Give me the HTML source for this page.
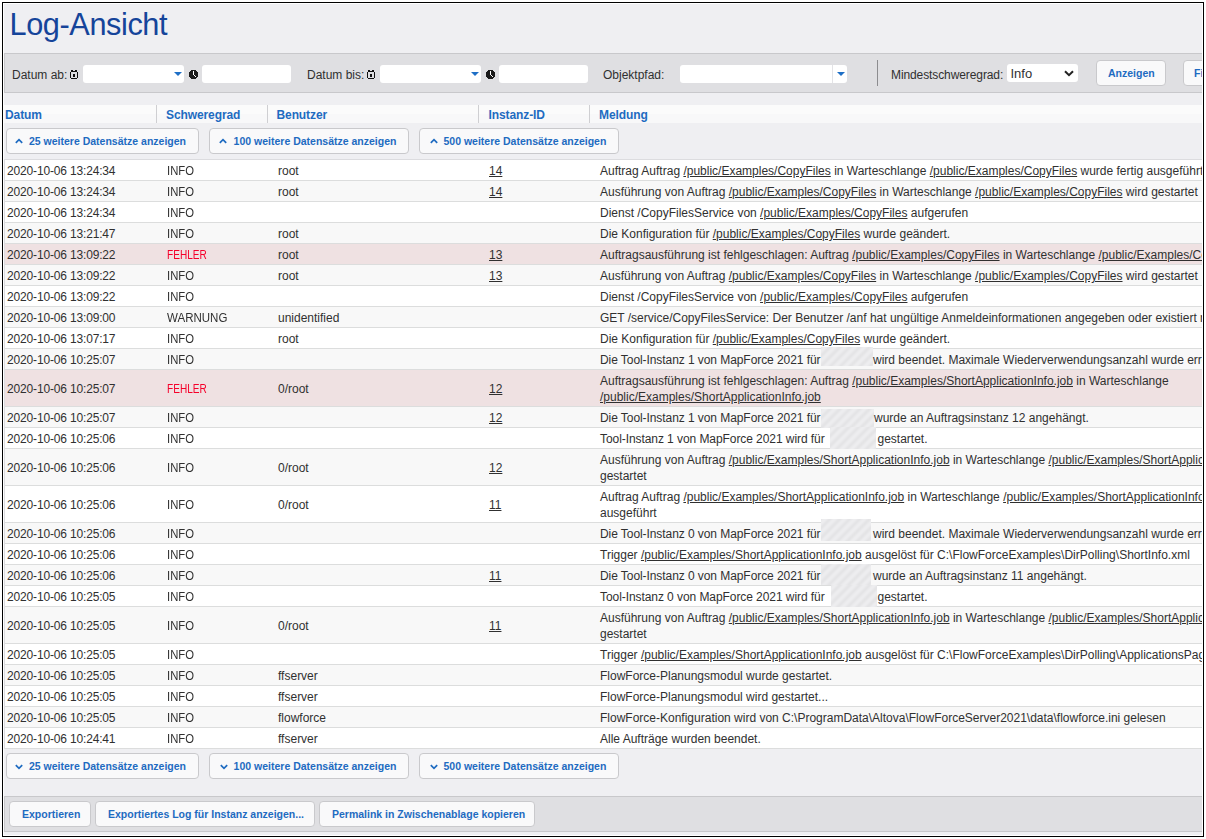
<!DOCTYPE html>
<html><head><meta charset="utf-8"><style>
*{box-sizing:border-box;margin:0;padding:0}
html,body{width:1206px;height:839px;overflow:hidden;background:#fff}
body{position:relative;font-family:"Liberation Sans",sans-serif;color:#303030;font-size:12px}
#frame{position:absolute;left:2px;top:2px;width:1202px;height:835px;border:1px solid #000;background:#fff}
#inner{position:absolute;left:4px;top:4px;width:1198px;height:831px;background:#efeff2;overflow:hidden}
#pg{position:absolute;left:-4px;top:-4px;width:1400px;height:900px}
.a{position:absolute;white-space:nowrap}
.t{line-height:16px;font-size:12px}
.title{font-size:30.7px;letter-spacing:-0.4px;color:#15449a;line-height:36px}
.bar{position:absolute;left:4px;width:1300px;background:#dfdfe2;border:1px solid #c8c8cb}
.inp{position:absolute;background:#fff;border-radius:3px}
.tri{position:absolute;width:0;height:0;border-left:4px solid transparent;border-right:4px solid transparent;border-top:4.5px solid #1e6fc6}
.btn{position:absolute;background:#f9f9fa;border:1px solid #c9c9cc;border-radius:4px}
.bt{position:absolute;font-weight:bold;font-size:10.5px;color:#1e6bc1;line-height:14px;white-space:nowrap}
.hd{position:absolute;font-weight:bold;font-size:12px;letter-spacing:-0.1px;color:#1e6bc1;line-height:16px;white-space:nowrap}
.sep{position:absolute;width:1px;background:#cfcfd2}
.row{position:absolute;left:4px;width:1300px;border-bottom:1px solid #dcdddd}
.c{position:absolute;white-space:nowrap;line-height:16px}
.u{text-decoration:underline}
.err{color:#f5002a}
.blur{position:absolute;overflow:hidden}
.bi{position:absolute;left:-4px;top:-4px;right:-4px;bottom:-4px;background-image:repeating-linear-gradient(135deg,rgba(0,0,0,0) 0px,rgba(0,0,0,0) 3px,rgba(0,0,0,0.075) 5px,rgba(0,0,0,0) 7px) !important;filter:blur(1px)}
</style></head>
<body><div id="frame"></div><div id="inner"><div id="pg">
<div class="a title" style="left:9.5px;top:7px">Log-Ansicht</div>
<div class="bar" style="top:53px;height:40px"></div>
<div class="a t" style="left:12px;top:67px;">Datum ab:</div>
<svg class="a" style="left:70px;top:70px" width="8" height="9" viewBox="0 0 8 9" shape-rendering="crispEdges"><path d="M1 0h2v1h-2z M5 0h2v1h-2z M1 1h6v1h-6z M0 2h1v6h-1z M7 2h1v6h-1z M1 8h6v1h-6z M3 4h2v3h-2z" fill="#111"/></svg>
<div class="inp" style="left:83px;top:65px;width:101px;height:18px"></div>
<div class="tri" style="left:174px;top:72px"></div>
<svg class="a" style="left:189px;top:70px" width="9" height="9" viewBox="0 0 9 9" shape-rendering="crispEdges"><path d="M2 0h5v1h-5z M1 1h7v1h-7z M0 2h9v5h-9z M1 7h7v1h-7z M2 8h5v1h-5z" fill="#1a1a1a"/><path d="M4 1h1v4h-1z M5 5h1v1h-1z M6 6h1v1h-1z" fill="#fff"/></svg>
<div class="inp" style="left:202px;top:65px;width:89px;height:18px"></div>
<div class="a t" style="left:307px;top:67px;">Datum bis:</div>
<svg class="a" style="left:367px;top:70px" width="8" height="9" viewBox="0 0 8 9" shape-rendering="crispEdges"><path d="M1 0h2v1h-2z M5 0h2v1h-2z M1 1h6v1h-6z M0 2h1v6h-1z M7 2h1v6h-1z M1 8h6v1h-6z M3 4h2v3h-2z" fill="#111"/></svg>
<div class="inp" style="left:380px;top:65px;width:101px;height:18px"></div>
<div class="tri" style="left:471px;top:72px"></div>
<svg class="a" style="left:486px;top:70px" width="9" height="9" viewBox="0 0 9 9" shape-rendering="crispEdges"><path d="M2 0h5v1h-5z M1 1h7v1h-7z M0 2h9v5h-9z M1 7h7v1h-7z M2 8h5v1h-5z" fill="#1a1a1a"/><path d="M4 1h1v4h-1z M5 5h1v1h-1z M6 6h1v1h-1z" fill="#fff"/></svg>
<div class="inp" style="left:499px;top:65px;width:89px;height:18px"></div>
<div class="a t" style="left:603px;top:67px;">Objektpfad:</div>
<div class="inp" style="left:680px;top:65px;width:167px;height:18px"></div>
<div class="a" style="left:832px;top:65px;width:1px;height:18px;background:#e3e3e6"></div>
<div class="tri" style="left:837px;top:72px"></div>
<div class="a" style="left:877px;top:60px;width:1px;height:26px;background:#8c8c8f"></div>
<div class="a t" style="left:891px;top:67px;letter-spacing:-0.1px">Mindestschweregrad:</div>
<div class="inp" style="left:1007px;top:64px;width:71px;height:18px"></div>
<div class="a" style="left:1010.5px;top:66px;font-size:13px;line-height:16px">Info</div>
<svg class="a" style="left:1064px;top:70px" width="10" height="7" viewBox="0 0 10 7"><path d="M1 1.2 L5 5.2 L9 1.2" stroke="#222" stroke-width="2" fill="none"/></svg>
<div class="btn" style="left:1096px;top:60px;width:70px;height:26px"></div>
<div class="bt" style="left:1108px;top:66px">Anzeigen</div>
<div class="btn" style="left:1183px;top:60px;width:80px;height:26px"></div>
<div class="bt" style="left:1194px;top:66px">Filter</div>
<div class="a" style="left:4px;top:105px;width:1300px;height:18px;background:linear-gradient(#fbfbfb 0,#fbfbfb 9px,#f8f8f9 9px,#f8f8f9 18px)"></div>
<div class="sep" style="left:156px;top:105px;height:18px"></div>
<div class="sep" style="left:267px;top:105px;height:18px"></div>
<div class="sep" style="left:478px;top:105px;height:18px"></div>
<div class="sep" style="left:589px;top:105px;height:18px"></div>
<div class="hd" style="left:5px;top:107px">Datum</div>
<div class="hd" style="left:166px;top:107px">Schweregrad</div>
<div class="hd" style="left:276.5px;top:107px">Benutzer</div>
<div class="hd" style="left:488.5px;top:107px">Instanz-ID</div>
<div class="hd" style="left:599px;top:107px">Meldung</div>
<div class="btn" style="left:6px;top:128px;width:193px;height:26px"></div>
<svg class="a" style="left:14.6px;top:138px" width="8" height="6" viewBox="0 0 8 6"><path d="M0.8 4.8 L4 1.6 L7.2 4.8" stroke="#1e6bc1" stroke-width="1.7" fill="none"/></svg>
<div class="bt" style="left:29px;top:134px">25 weitere Datensätze anzeigen</div>
<div class="btn" style="left:209px;top:128px;width:200px;height:26px"></div>
<svg class="a" style="left:218.8px;top:138px" width="8" height="6" viewBox="0 0 8 6"><path d="M0.8 4.8 L4 1.6 L7.2 4.8" stroke="#1e6bc1" stroke-width="1.7" fill="none"/></svg>
<div class="bt" style="left:233.6px;top:134px">100 weitere Datensätze anzeigen</div>
<div class="btn" style="left:419px;top:128px;width:200px;height:26px"></div>
<svg class="a" style="left:429.6px;top:138px" width="8" height="6" viewBox="0 0 8 6"><path d="M0.8 4.8 L4 1.6 L7.2 4.8" stroke="#1e6bc1" stroke-width="1.7" fill="none"/></svg>
<div class="bt" style="left:443.5px;top:134px">500 weitere Datensätze anzeigen</div>
<div class="a" style="left:4px;top:159px;width:1300px;height:1px;background:#dcdcdf"></div>
<div class="row" style="top:160px;height:21px;background:#ffffff"></div>
<div class="c" style="left:7px;top:163px;letter-spacing:-0.16px">2020-10-06 13:24:34</div>
<div class="c" style="left:167px;top:163px;transform:scaleX(0.94);transform-origin:0 0">INFO</div>
<div class="c" style="left:278px;top:163px">root</div>
<div class="c u" style="left:489px;top:163px">14</div>
<div class="c" style="left:600px;top:163px">Auftrag Auftrag <span class="u">/public/Examples/CopyFiles</span> in Warteschlange <span class="u">/public/Examples/CopyFiles</span> wurde fertig ausgeführt</div>
<div class="row" style="top:181px;height:21px;background:#f8f8f8"></div>
<div class="c" style="left:7px;top:184px;letter-spacing:-0.16px">2020-10-06 13:24:34</div>
<div class="c" style="left:167px;top:184px;transform:scaleX(0.94);transform-origin:0 0">INFO</div>
<div class="c" style="left:278px;top:184px">root</div>
<div class="c u" style="left:489px;top:184px">14</div>
<div class="c" style="left:600px;top:184px">Ausführung von Auftrag <span class="u">/public/Examples/CopyFiles</span> in Warteschlange <span class="u">/public/Examples/CopyFiles</span> wird gestartet</div>
<div class="row" style="top:202px;height:21px;background:#ffffff"></div>
<div class="c" style="left:7px;top:205px;letter-spacing:-0.16px">2020-10-06 13:24:34</div>
<div class="c" style="left:167px;top:205px;transform:scaleX(0.94);transform-origin:0 0">INFO</div>
<div class="c" style="left:600px;top:205px">Dienst /CopyFilesService von <span class="u">/public/Examples/CopyFiles</span> aufgerufen</div>
<div class="row" style="top:223px;height:21px;background:#f8f8f8"></div>
<div class="c" style="left:7px;top:226px;letter-spacing:-0.16px">2020-10-06 13:21:47</div>
<div class="c" style="left:167px;top:226px;transform:scaleX(0.94);transform-origin:0 0">INFO</div>
<div class="c" style="left:278px;top:226px">root</div>
<div class="c" style="left:600px;top:226px">Die Konfiguration für <span class="u">/public/Examples/CopyFiles</span> wurde geändert.</div>
<div class="row" style="top:244px;height:21px;background:#efe1e2"></div>
<div class="c" style="left:7px;top:247px;letter-spacing:-0.16px">2020-10-06 13:09:22</div>
<div class="c err" style="left:167px;top:247px;transform:scaleX(0.84);transform-origin:0 0">FEHLER</div>
<div class="c" style="left:278px;top:247px">root</div>
<div class="c u" style="left:489px;top:247px">13</div>
<div class="c" style="left:600px;top:247px">Auftragsausführung ist fehlgeschlagen: Auftrag <span class="u">/public/Examples/CopyFiles</span> in Warteschlange <span class="u">/public/Examples/CopyFiles</span></div>
<div class="row" style="top:265px;height:21px;background:#f8f8f8"></div>
<div class="c" style="left:7px;top:268px;letter-spacing:-0.16px">2020-10-06 13:09:22</div>
<div class="c" style="left:167px;top:268px;transform:scaleX(0.94);transform-origin:0 0">INFO</div>
<div class="c" style="left:278px;top:268px">root</div>
<div class="c u" style="left:489px;top:268px">13</div>
<div class="c" style="left:600px;top:268px">Ausführung von Auftrag <span class="u">/public/Examples/CopyFiles</span> in Warteschlange <span class="u">/public/Examples/CopyFiles</span> wird gestartet</div>
<div class="row" style="top:286px;height:21px;background:#ffffff"></div>
<div class="c" style="left:7px;top:289px;letter-spacing:-0.16px">2020-10-06 13:09:22</div>
<div class="c" style="left:167px;top:289px;transform:scaleX(0.94);transform-origin:0 0">INFO</div>
<div class="c" style="left:600px;top:289px">Dienst /CopyFilesService von <span class="u">/public/Examples/CopyFiles</span> aufgerufen</div>
<div class="row" style="top:307px;height:21px;background:#f8f8f8"></div>
<div class="c" style="left:7px;top:310px;letter-spacing:-0.16px">2020-10-06 13:09:00</div>
<div class="c" style="left:167px;top:310px;transform:scaleX(0.96);transform-origin:0 0">WARNUNG</div>
<div class="c" style="left:278px;top:310px">unidentified</div>
<div class="c" style="left:600px;top:310px">GET /service/CopyFilesService: Der Benutzer /anf hat ungültige Anmeldeinformationen angegeben oder existiert nicht</div>
<div class="row" style="top:328px;height:21px;background:#ffffff"></div>
<div class="c" style="left:7px;top:331px;letter-spacing:-0.16px">2020-10-06 13:07:17</div>
<div class="c" style="left:167px;top:331px;transform:scaleX(0.94);transform-origin:0 0">INFO</div>
<div class="c" style="left:278px;top:331px">root</div>
<div class="c" style="left:600px;top:331px">Die Konfiguration für <span class="u">/public/Examples/CopyFiles</span> wurde geändert.</div>
<div class="row" style="top:349px;height:21px;background:#f8f8f8"></div>
<div class="c" style="left:7px;top:352px;letter-spacing:-0.16px">2020-10-06 10:25:07</div>
<div class="c" style="left:167px;top:352px;transform:scaleX(0.94);transform-origin:0 0">INFO</div>
<div class="c" style="left:600px;top:352px;letter-spacing:-0.07px">Die Tool-Instanz 1 von MapForce 2021 für </div>
<div class="blur" style="left:821px;top:347px;width:52px;height:19px"><div class="bi" style="background:#eeeef0"></div></div>
<div class="c" style="left:873px;top:352px">wird beendet. Maximale Wiederverwendungsanzahl wurde erreicht</div>
<div class="row" style="top:370px;height:37px;background:#efe1e2"></div>
<div class="c" style="left:7px;top:381px;letter-spacing:-0.16px">2020-10-06 10:25:07</div>
<div class="c err" style="left:167px;top:381px;transform:scaleX(0.84);transform-origin:0 0">FEHLER</div>
<div class="c" style="left:278px;top:381px">0/root</div>
<div class="c u" style="left:489px;top:381px">12</div>
<div class="c" style="left:600px;top:373px">Auftragsausführung ist fehlgeschlagen: Auftrag <span class="u">/public/Examples/ShortApplicationInfo.job</span> in Warteschlange<br><span class="u">/public/Examples/ShortApplicationInfo.job</span></div>
<div class="row" style="top:407px;height:21px;background:#f8f8f8"></div>
<div class="c" style="left:7px;top:410px;letter-spacing:-0.16px">2020-10-06 10:25:07</div>
<div class="c" style="left:167px;top:410px;transform:scaleX(0.94);transform-origin:0 0">INFO</div>
<div class="c u" style="left:489px;top:410px">12</div>
<div class="c" style="left:600px;top:410px;letter-spacing:-0.07px">Die Tool-Instanz 1 von MapForce 2021 für </div>
<div class="blur" style="left:821px;top:409px;width:53px;height:19px"><div class="bi" style="background:#eeeef0"></div></div>
<div class="c" style="left:874px;top:410px">wurde an Auftragsinstanz 12 angehängt.</div>
<div class="row" style="top:428px;height:21px;background:#ffffff"></div>
<div class="c" style="left:7px;top:431px;letter-spacing:-0.16px">2020-10-06 10:25:06</div>
<div class="c" style="left:167px;top:431px;transform:scaleX(0.94);transform-origin:0 0">INFO</div>
<div class="c" style="left:600px;top:431px;letter-spacing:-0.07px">Tool-Instanz 1 von MapForce 2021 wird für </div>
<div class="blur" style="left:830px;top:427px;width:46px;height:22px"><div class="bi" style="background:#eeeef0"></div></div>
<div class="c" style="left:877.5px;top:431px">gestartet.</div>
<div class="row" style="top:449px;height:37px;background:#f8f8f8"></div>
<div class="c" style="left:7px;top:460px;letter-spacing:-0.16px">2020-10-06 10:25:06</div>
<div class="c" style="left:167px;top:460px;transform:scaleX(0.94);transform-origin:0 0">INFO</div>
<div class="c" style="left:278px;top:460px">0/root</div>
<div class="c u" style="left:489px;top:460px">12</div>
<div class="c" style="left:600px;top:452px">Ausführung von Auftrag <span class="u">/public/Examples/ShortApplicationInfo.job</span> in Warteschlange <span class="u">/public/Examples/ShortApplicationInfo.job</span> wird<br>gestartet</div>
<div class="row" style="top:486px;height:37px;background:#ffffff"></div>
<div class="c" style="left:7px;top:497px;letter-spacing:-0.16px">2020-10-06 10:25:06</div>
<div class="c" style="left:167px;top:497px;transform:scaleX(0.94);transform-origin:0 0">INFO</div>
<div class="c" style="left:278px;top:497px">0/root</div>
<div class="c u" style="left:489px;top:497px">11</div>
<div class="c" style="left:600px;top:489px">Auftrag Auftrag <span class="u">/public/Examples/ShortApplicationInfo.job</span> in Warteschlange <span class="u">/public/Examples/ShortApplicationInfo.job</span> wurde fertig<br>ausgeführt</div>
<div class="row" style="top:523px;height:21px;background:#f8f8f8"></div>
<div class="c" style="left:7px;top:526px;letter-spacing:-0.16px">2020-10-06 10:25:06</div>
<div class="c" style="left:167px;top:526px;transform:scaleX(0.94);transform-origin:0 0">INFO</div>
<div class="c" style="left:600px;top:526px;letter-spacing:-0.07px">Die Tool-Instanz 0 von MapForce 2021 für </div>
<div class="blur" style="left:821px;top:519px;width:50px;height:22px"><div class="bi" style="background:#eeeef0"></div></div>
<div class="c" style="left:873px;top:526px">wird beendet. Maximale Wiederverwendungsanzahl wurde erreicht</div>
<div class="row" style="top:544px;height:21px;background:#ffffff"></div>
<div class="c" style="left:7px;top:547px;letter-spacing:-0.16px">2020-10-06 10:25:06</div>
<div class="c" style="left:167px;top:547px;transform:scaleX(0.94);transform-origin:0 0">INFO</div>
<div class="c" style="left:600px;top:547px">Trigger <span class="u">/public/Examples/ShortApplicationInfo.job</span> ausgelöst für C:\FlowForceExamples\DirPolling\ShortInfo.xml</div>
<div class="row" style="top:565px;height:21px;background:#f8f8f8"></div>
<div class="c" style="left:7px;top:568px;letter-spacing:-0.16px">2020-10-06 10:25:06</div>
<div class="c" style="left:167px;top:568px;transform:scaleX(0.94);transform-origin:0 0">INFO</div>
<div class="c u" style="left:489px;top:568px">11</div>
<div class="c" style="left:600px;top:568px;letter-spacing:-0.07px">Die Tool-Instanz 0 von MapForce 2021 für </div>
<div class="blur" style="left:821px;top:564px;width:50px;height:21px"><div class="bi" style="background:#eeeef0"></div></div>
<div class="c" style="left:873px;top:568px">wurde an Auftragsinstanz 11 angehängt.</div>
<div class="row" style="top:586px;height:21px;background:#ffffff"></div>
<div class="c" style="left:7px;top:589px;letter-spacing:-0.16px">2020-10-06 10:25:05</div>
<div class="c" style="left:167px;top:589px;transform:scaleX(0.94);transform-origin:0 0">INFO</div>
<div class="c" style="left:600px;top:589px;letter-spacing:-0.07px">Tool-Instanz 0 von MapForce 2021 wird für </div>
<div class="blur" style="left:831px;top:585px;width:46px;height:22px"><div class="bi" style="background:#eeeef0"></div></div>
<div class="c" style="left:877.5px;top:589px">gestartet.</div>
<div class="row" style="top:607px;height:37px;background:#f8f8f8"></div>
<div class="c" style="left:7px;top:618px;letter-spacing:-0.16px">2020-10-06 10:25:05</div>
<div class="c" style="left:167px;top:618px;transform:scaleX(0.94);transform-origin:0 0">INFO</div>
<div class="c" style="left:278px;top:618px">0/root</div>
<div class="c u" style="left:489px;top:618px">11</div>
<div class="c" style="left:600px;top:610px">Ausführung von Auftrag <span class="u">/public/Examples/ShortApplicationInfo.job</span> in Warteschlange <span class="u">/public/Examples/ShortApplicationInfo.job</span> wird<br>gestartet</div>
<div class="row" style="top:644px;height:21px;background:#ffffff"></div>
<div class="c" style="left:7px;top:647px;letter-spacing:-0.16px">2020-10-06 10:25:05</div>
<div class="c" style="left:167px;top:647px;transform:scaleX(0.94);transform-origin:0 0">INFO</div>
<div class="c" style="left:600px;top:647px">Trigger <span class="u">/public/Examples/ShortApplicationInfo.job</span> ausgelöst für C:\FlowForceExamples\DirPolling\ApplicationsPage.xml</div>
<div class="row" style="top:665px;height:21px;background:#f8f8f8"></div>
<div class="c" style="left:7px;top:668px;letter-spacing:-0.16px">2020-10-06 10:25:05</div>
<div class="c" style="left:167px;top:668px;transform:scaleX(0.94);transform-origin:0 0">INFO</div>
<div class="c" style="left:278px;top:668px">ffserver</div>
<div class="c" style="left:600px;top:668px">FlowForce-Planungsmodul wurde gestartet.</div>
<div class="row" style="top:686px;height:21px;background:#ffffff"></div>
<div class="c" style="left:7px;top:689px;letter-spacing:-0.16px">2020-10-06 10:25:05</div>
<div class="c" style="left:167px;top:689px;transform:scaleX(0.94);transform-origin:0 0">INFO</div>
<div class="c" style="left:278px;top:689px">ffserver</div>
<div class="c" style="left:600px;top:689px">FlowForce-Planungsmodul wird gestartet...</div>
<div class="row" style="top:707px;height:21px;background:#f8f8f8"></div>
<div class="c" style="left:7px;top:710px;letter-spacing:-0.16px">2020-10-06 10:25:05</div>
<div class="c" style="left:167px;top:710px;transform:scaleX(0.94);transform-origin:0 0">INFO</div>
<div class="c" style="left:278px;top:710px">flowforce</div>
<div class="c" style="left:600px;top:710px">FlowForce-Konfiguration wird von C:\ProgramData\Altova\FlowForceServer2021\data\flowforce.ini gelesen</div>
<div class="row" style="top:728px;height:21px;background:#ffffff"></div>
<div class="c" style="left:7px;top:731px;letter-spacing:-0.16px">2020-10-06 10:24:41</div>
<div class="c" style="left:167px;top:731px;transform:scaleX(0.94);transform-origin:0 0">INFO</div>
<div class="c" style="left:278px;top:731px">ffserver</div>
<div class="c" style="left:600px;top:731px">Alle Aufträge wurden beendet.</div>
<div class="a" style="left:4px;top:159px;width:1px;height:590px;background:#dcdcdf"></div>
<div class="btn" style="left:6px;top:753px;width:193px;height:26px"></div>
<svg class="a" style="left:15.4px;top:763.6px" width="8" height="6" viewBox="0 0 8 6"><path d="M0.8 1.2 L4 4.4 L7.2 1.2" stroke="#1e6bc1" stroke-width="1.7" fill="none"/></svg>
<div class="bt" style="left:29px;top:759px">25 weitere Datensätze anzeigen</div>
<div class="btn" style="left:209px;top:753px;width:200px;height:26px"></div>
<svg class="a" style="left:219.60000000000002px;top:763.6px" width="8" height="6" viewBox="0 0 8 6"><path d="M0.8 1.2 L4 4.4 L7.2 1.2" stroke="#1e6bc1" stroke-width="1.7" fill="none"/></svg>
<div class="bt" style="left:233.6px;top:759px">100 weitere Datensätze anzeigen</div>
<div class="btn" style="left:419px;top:753px;width:200px;height:26px"></div>
<svg class="a" style="left:430.40000000000003px;top:763.6px" width="8" height="6" viewBox="0 0 8 6"><path d="M0.8 1.2 L4 4.4 L7.2 1.2" stroke="#1e6bc1" stroke-width="1.7" fill="none"/></svg>
<div class="bt" style="left:443.5px;top:759px">500 weitere Datensätze anzeigen</div>
<div class="bar" style="top:796px;height:36px"></div>
<div class="btn" style="left:9px;top:801px;width:82px;height:26px"></div>
<div class="bt" style="left:22px;top:807px">Exportieren</div>
<div class="btn" style="left:95px;top:801px;width:220px;height:26px"></div>
<div class="bt" style="left:108px;top:807px">Exportiertes Log für Instanz anzeigen...</div>
<div class="btn" style="left:319px;top:801px;width:216px;height:26px"></div>
<div class="bt" style="left:332px;top:807px">Permalink in Zwischenablage kopieren</div>
</div></div></body></html>
